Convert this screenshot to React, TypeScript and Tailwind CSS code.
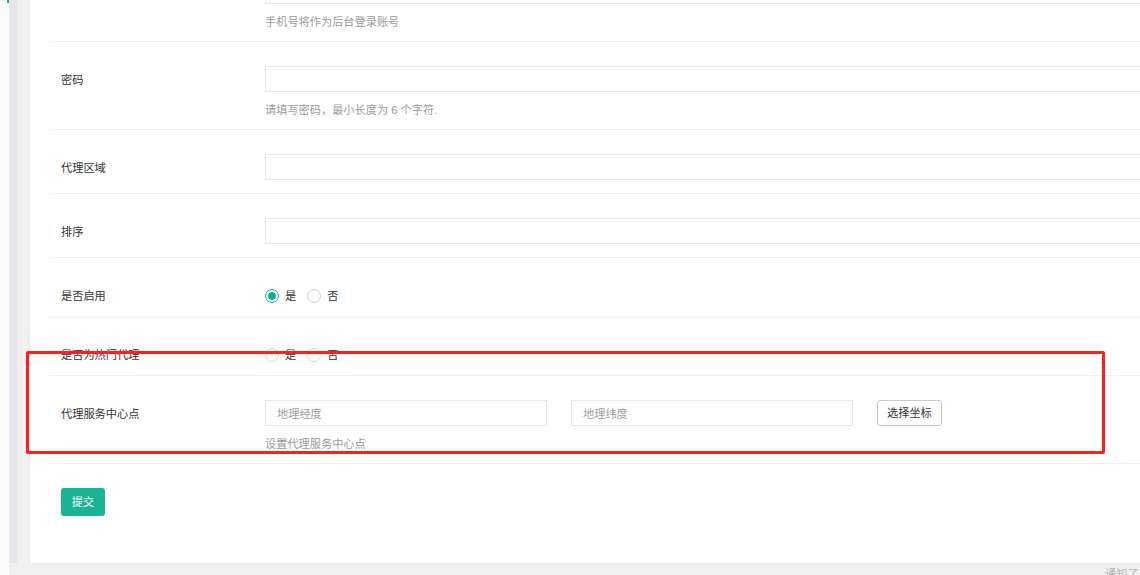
const font = { fontFamily: '"Liberation Sans", "Noto Sans CJK SC", sans-serif' };

function Radio({ checked, label }: { checked?: boolean; label: string }) {
  return (
    <label className="mr-[11px] flex items-center gap-[6px]">
      <span
        className={
          checked
            ? "flex h-[14px] w-[14px] items-center justify-center rounded-full border border-[#1ab394] bg-white"
            : "h-[14px] w-[14px] rounded-full border border-[#d5d5d5] bg-white"
        }
      >
        {checked && <span className="h-[8px] w-[8px] rounded-full bg-[#1ab394]" />}
      </span>
      <span className="text-[#333]">{label}</span>
    </label>
  );
}

function Row({
  label,
  help,
  children,
  radio,
}: {
  label: string;
  help?: string;
  children: React.ReactNode;
  radio?: boolean;
}) {
  return (
    <div
      className={`flex border-b border-[#eeeff1] ${
        radio ? "pt-[29px] pb-[11px]" : help ? "pt-[24px] pb-[11px]" : "pt-[24px] pb-[13px]"
      }`}
    >
      <div
        className={`flex w-[216px] shrink-0 pl-[12px] text-[#333] ${
          radio ? "h-[18px] items-center" : "h-[26px] items-center pt-[2px]"
        }`}
      >
        {label}
      </div>
      <div className="flex-1">
        <div className={`flex items-center ${radio ? "h-[18px]" : "h-[26px]"}`}>{children}</div>
        {help && <div className="mt-[10px] h-[16px] leading-[16px] text-[#9a9a9a]">{help}</div>}
      </div>
    </div>
  );
}

function TextInput({ placeholder, className = "w-full" }: { placeholder?: string; className?: string }) {
  return (
    <input
      placeholder={placeholder}
      className={`h-[26px] border border-[#e5e6e7] bg-white px-[11px] pt-[1px] text-[11.2px] text-[#333] outline-none placeholder:text-[#a0a0a0] ${className}`}
    />
  );
}

export default function App() {
  return (
    <div className="relative flex h-[575px] w-[1140px] overflow-hidden bg-white text-[11.2px]" style={font}>
      <div className="relative w-[9px] shrink-0 bg-[#fbfbfc]">
        <div className="absolute right-0 top-0 h-[3px] w-[2px] bg-[#1ab394]" />
      </div>
      <div className="flex flex-1 flex-col bg-[#f0f0f0]">
        <div className="flex min-h-0 flex-1">
          <div className="w-[8px] shrink-0 bg-[#e5e6eb]" />
          <div className="w-[12px] shrink-0 bg-[#f0f0f0]" />
          <div className="w-[1180px] shrink-0 overflow-hidden border-l border-[#e7eaec] bg-white pl-[19px]">
            {/* partial row scrolled off the top */}
            <div className="flex border-b border-[#eeeff1] pb-[11px]">
              <div className="w-[216px] shrink-0" />
              <div className="flex-1">
                <TextInput className="-mt-[22px] block w-full" />
                <div className="mt-[10px] h-[16px] leading-[16px] text-[#9a9a9a]">手机号将作为后台登录账号</div>
              </div>
            </div>

            <Row label="密码" help="请填写密码，最小长度为 6 个字符.">
              <TextInput />
            </Row>
            <Row label="代理区域">
              <TextInput />
            </Row>
            <Row label="排序">
              <TextInput />
            </Row>
            <Row label="是否启用" radio>
              <Radio checked label="是" />
              <Radio label="否" />
            </Row>
            <Row label="是否为热门代理" radio>
              <Radio label="是" />
              <Radio label="否" />
            </Row>
            <Row label="代理服务中心点" help="设置代理服务中心点">
              <TextInput placeholder="地理经度" className="w-[282px]" />
              <TextInput placeholder="地理纬度" className="ml-[24px] w-[282px]" />
              <button
                type="button"
                className="ml-[24px] h-[26px] rounded-[3px] border border-[#c8c8c8] bg-white px-[9px] pt-[1px] text-[#333]"
              >
                选择坐标
              </button>
            </Row>

            <div className="pl-[12px] pt-[24px]">
              <button
                type="button"
                className="h-[28px] w-[44px] rounded-[3px] bg-[#1ab394] pt-[1px] text-white"
              >
                提交
              </button>
            </div>
          </div>
        </div>
        <div className="relative h-[12px] shrink-0 bg-[#f0f0f0]">
          <span className="absolute left-[1096px] top-[4px] text-[11.2px] leading-[14px] text-[#b5b5b5]">通知了</span>
        </div>
      </div>

      {/* annotation box */}
      <div className="pointer-events-none absolute left-[26px] top-[351px] h-[103px] w-[1079px] rounded-[2px] border-[3px] border-[#ff1d1d]" />
    </div>
  );
}
